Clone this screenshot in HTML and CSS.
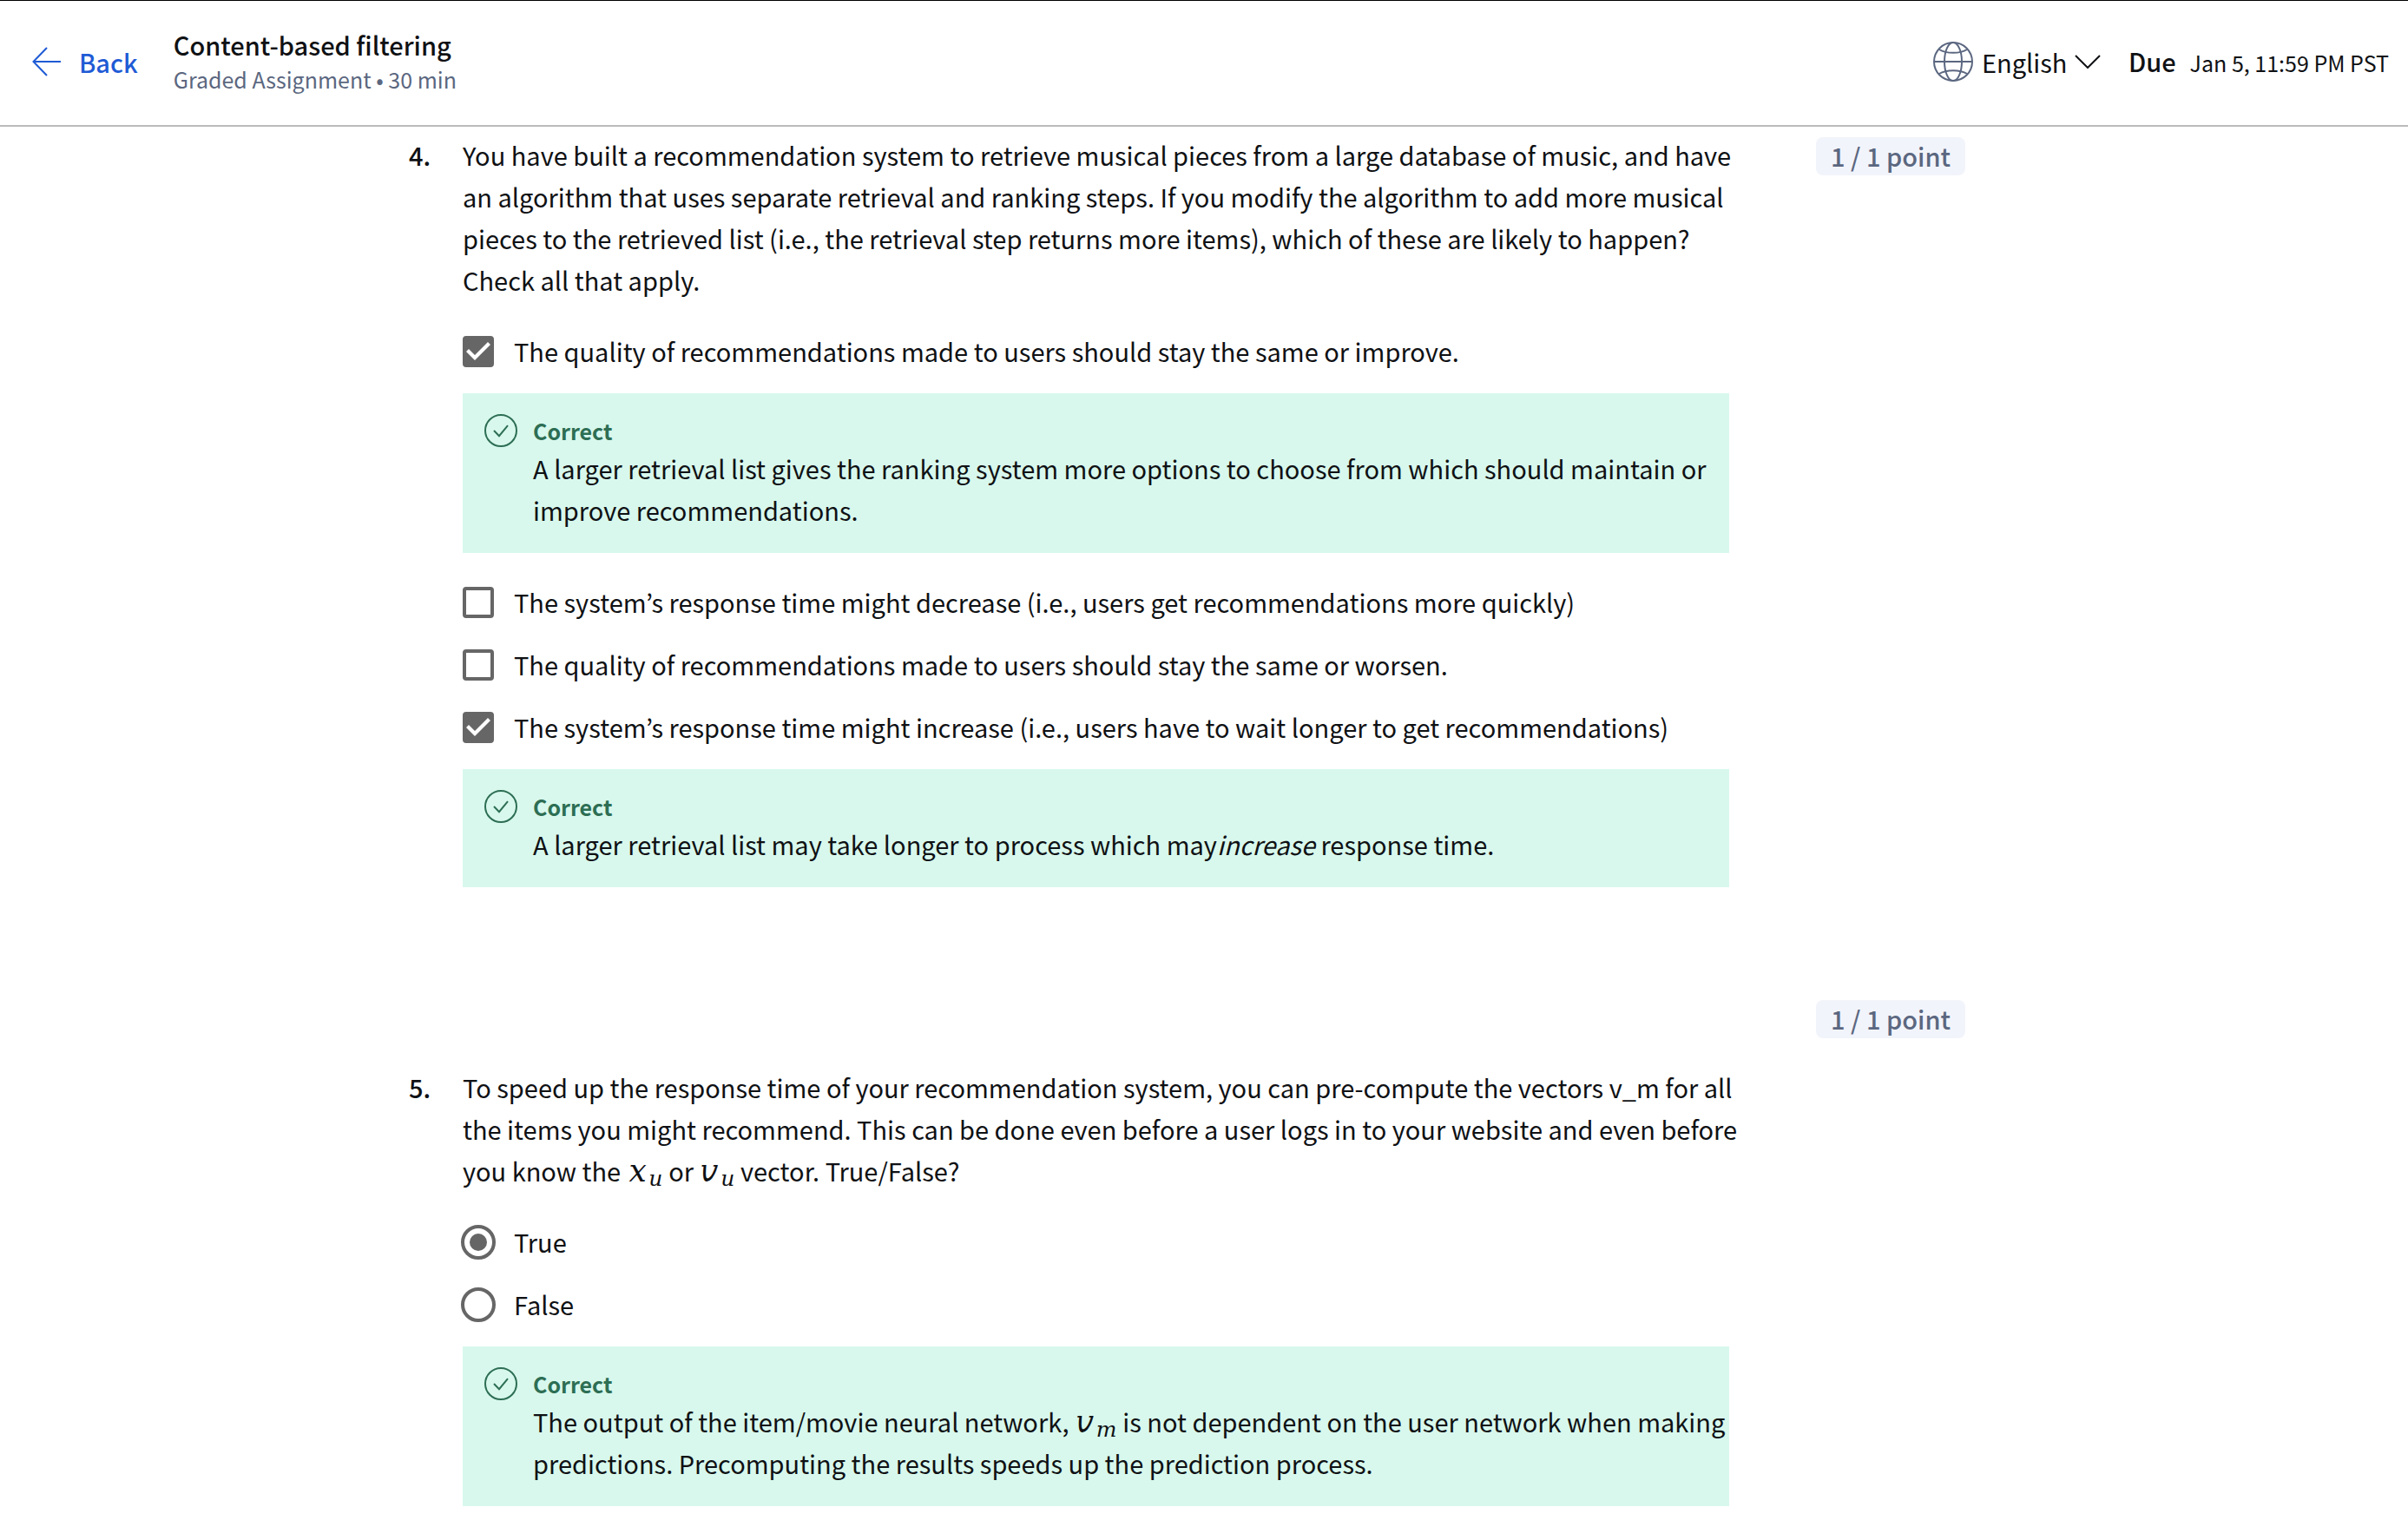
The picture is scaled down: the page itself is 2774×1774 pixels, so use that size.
FILE: index.html
```html
<!DOCTYPE html>
<html lang="en">
<head>
<meta charset="utf-8">
<title>Content-based filtering</title>
<link rel="stylesheet" href="styles.css">
</head>
<body>
<svg class="sprite" aria-hidden="true">
  <symbol id="icon-correct" viewBox="0 0 38 38">
    <circle cx="19" cy="19" r="18" fill="none" stroke="currentColor" stroke-width="2"/>
    <path d="M11 19l6 6.200l10-12" fill="none" stroke="currentColor" stroke-width="2"/>
  </symbol>
</svg>
<header class="topbar">
  <a class="back" href="#">
    <svg class="back-icon" viewBox="0 0 34 34" aria-hidden="true"><path d="M17 1L1.500 17L17 33M1.500 17H33" fill="none" stroke="currentColor" stroke-width="2"/></svg>
    Back
  </a>
  <div class="heading">
    <h1 class="title">Content-based filtering</h1>
    <p class="subtitle">Graded Assignment • 30 min</p>
  </div>
  <div class="language">
    <svg class="globe" viewBox="0 0 46 46" aria-hidden="true">
      <g fill="none" stroke="currentColor" stroke-width="2">
        <circle cx="23" cy="23" r="22"/>
        <ellipse cx="23" cy="23" rx="10" ry="22"/>
        <path d="M1 23H45M7 9C15 14 31 14 39 9M7 37C15 32 31 32 39 37"/>
      </g>
    </svg>
    <div class="picker">
      <select class="select" aria-label="Language"><option>English</option></select>
      <svg class="chevron" viewBox="0 0 30 16" aria-hidden="true"><path d="M1 1L15 15L29 1" fill="none" stroke="currentColor" stroke-width="2"/></svg>
    </div>
  </div>
  <p class="due"><strong class="due-label">Due</strong><span class="due-date">Jan 5, 11:59 PM PST</span></p>
</header>
<main class="quiz">
  <section class="question">
    <span class="number">4.</span>
    <div class="body">
      <p class="prompt">You have built a recommendation system to retrieve musical pieces from a large database of music, and have an algorithm that uses separate retrieval and ranking steps. If you modify the algorithm to add more musical pieces to the retrieved list (i.e., the retrieval step returns more items), which of these are likely to happen? Check all that apply.</p>
      <div class="options">
        <label class="option"><input class="check" type="checkbox" checked>The quality of recommendations made to users should stay the same or improve.</label>
        <div class="feedback">
          <svg class="feedback-icon" aria-hidden="true"><use href="#icon-correct"/></svg>
          <div class="feedback-text">
            <h2 class="verdict">Correct</h2>
            <p>A larger retrieval list gives the ranking system more options to choose from which should maintain or improve recommendations.</p>
          </div>
        </div>
        <label class="option"><input class="check" type="checkbox">The system’s response time might decrease (i.e., users get recommendations more quickly)</label>
        <label class="option"><input class="check" type="checkbox">The quality of recommendations made to users should stay the same or worsen.</label>
        <label class="option"><input class="check" type="checkbox" checked>The system’s response time might increase (i.e., users have to wait longer to get recommendations)</label>
        <div class="feedback">
          <svg class="feedback-icon" aria-hidden="true"><use href="#icon-correct"/></svg>
          <div class="feedback-text">
            <h2 class="verdict">Correct</h2>
            <p>A larger retrieval list may take longer to process which may<em>increase</em> response time.</p>
          </div>
        </div>
      </div>
    </div>
    <span class="points">1 / 1 point</span>
  </section>
  <section class="question question-spaced">
    <span class="number">5.</span>
    <div class="body">
      <p class="prompt">To speed up the response time of your recommendation system, you can pre-compute the vectors v_m for all the items you might recommend. This can be done even before a user logs in to your website and even before you know the <span class="math">𝑥<sub>𝑢</sub></span> or <span class="math">𝑣<sub>𝑢</sub></span> vector. True/False?</p>
      <div class="options">
        <label class="option"><input class="radio" type="radio" name="q5" checked>True</label>
        <label class="option"><input class="radio" type="radio" name="q5">False</label>
        <div class="feedback">
          <svg class="feedback-icon" aria-hidden="true"><use href="#icon-correct"/></svg>
          <div class="feedback-text">
            <h2 class="verdict">Correct</h2>
            <p>The output of the item/movie neural network, <span class="math">𝑣<sub>𝑚</sub></span> is not dependent on the user network when making predictions. Precomputing the results speeds up the prediction process.</p>
          </div>
        </div>
      </div>
    </div>
    <span class="points">1 / 1 point</span>
  </section>
</main>
</body>
</html>
```
FILE: styles.css
```css
* { box-sizing: border-box; }

body {
  margin: 0;
  background: #fff;
  color: #0f1114;
  font: 400 29px/48px "Noto Sans CJK KR", "Noto Sans", sans-serif;
}

h1, h2, p { margin: 0; }

.sprite { display: none; }

.topbar {
  display: flex;
  align-items: center;
  height: 146px;
  padding: 0 22px 3px 37px;
  border-top: 1px solid #000;
  border-bottom: 2px solid #bbb;
}

.back {
  display: flex;
  align-items: center;
  gap: 20px;
  color: #1f5bd5;
  font-weight: 500;
  text-decoration: none;
}

.back-icon { width: 34px; height: 34px; }

.heading { margin: 0 auto 0 41px; }

.title {
  font-size: 29px;
  font-weight: 500;
  line-height: 40px;
}

.subtitle {
  color: #5b6780;
  font-size: 25px;
  line-height: 40px;
}

.language {
  display: flex;
  align-items: center;
  gap: 10px;
}

.globe { width: 46px; height: 46px; color: #5b6780; }

.picker {
  display: grid;
  align-items: center;
}

.select {
  grid-area: 1 / 1;
  height: 48px;
  padding: 0 38px 0 0;
  border: 0;
  appearance: none;
  background: transparent;
  color: inherit;
  font: inherit;
}

.chevron {
  grid-area: 1 / 1;
  justify-self: end;
  width: 30px;
  height: 16px;
  pointer-events: none;
}

.due {
  display: flex;
  align-items: baseline;
  gap: 16px;
  margin-left: 32px;
}

.due-label { font-weight: 500; }

.due-date { font-size: 25px; }

.quiz { padding: 8px 510px 36px 471px; }

.question {
  display: grid;
  grid-template-columns: 62px 1fr auto;
  align-items: start;
}

.question-spaced { margin-top: 126px; }

.question-spaced .number,
.question-spaced .prompt { padding-top: 80px; }

.number { font-weight: 500; }

.prompt { margin-right: -20px; }

.points {
  margin: 4px 0 0 100px;
  padding: 0 17px 2px;
  border-radius: 8px;
  background: #f2f4fb;
  color: #5b6780;
  font-weight: 500;
  line-height: 42px;
}

.options {
  display: flex;
  flex-direction: column;
  gap: 24px;
  margin-top: 35px;
}

.option {
  display: flex;
  align-items: center;
  padding-bottom: 2px;
  line-height: 46px;
}

.check,
.radio {
  flex: none;
  display: grid;
  place-items: center;
  appearance: none;
  border: 4px solid #666;
  background: #fff;
}

.check {
  width: 36px;
  height: 36px;
  margin: 2px 23px 0 0;
  border-radius: 4px;
}

.check:checked { background: #666; }

.check:checked::before {
  content: "";
  width: 28px;
  height: 28px;
  background: #fff;
  clip-path: polygon(0 14px, 3px 11px, 10px 18px, 25px 3px, 28px 6px, 10px 24px);
}

.radio {
  width: 40px;
  height: 40px;
  margin: 2px 21px 0 -2px;
  border-radius: 50%;
}

.radio:checked::before {
  content: "";
  width: 20px;
  height: 20px;
  border-radius: 50%;
  background: #666;
}

.feedback {
  display: flex;
  gap: 18px;
  padding: 24px 4px 26px 25px;
  background: #d8f8ed;
}

.feedback + .option { margin-top: 9px; }

.feedback-icon {
  flex: none;
  width: 38px;
  height: 38px;
  color: #2d6e54;
}

.verdict {
  color: #2d6e54;
  font-size: 25px;
  font-weight: 700;
  line-height: 38px;
}

.math {
  font: 36px/36px "DejaVu Math TeX Gyre", "Liberation Serif", serif;
}

.math sub {
  font-size: 25px;
  line-height: 20px;
  vertical-align: -5px;
}
```
